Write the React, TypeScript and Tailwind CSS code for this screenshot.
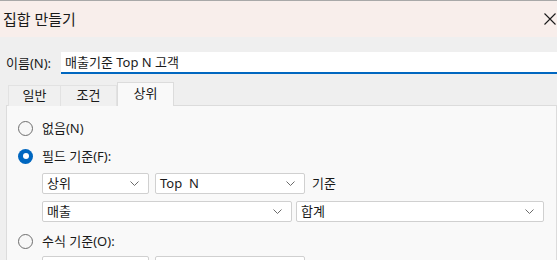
import React from "react";

const FONT = '"Noto Sans", "Noto Sans CJK KR", sans-serif';

function Chevron() {
  return (
    <svg width="9" height="5" viewBox="0 0 9 5" className="shrink-0">
      <path d="M0.5 0.5 L4.5 4.5 L8.5 0.5" fill="none" stroke="#6b6b6b" strokeWidth="1" />
    </svg>
  );
}

function Combo({ text, className }: { text: string; className: string }) {
  return (
    <div
      className={
        "h-[21px] bg-white border border-[#d0d0d0] rounded-[2px] flex items-center justify-between pl-[4px] pr-[9px] text-[13px] text-[#1a1a1a] " +
        className
      }
    >
      <span className="leading-none whitespace-pre">{text}</span>
      <Chevron />
    </div>
  );
}

function Radio({ checked, label }: { checked?: boolean; label: string }) {
  return (
    <div className="h-[20px] flex items-center">
      {checked ? (
        <div className="w-[15px] h-[15px] rounded-full bg-[#0067c0] flex items-center justify-center">
          <div className="w-[6px] h-[6px] rounded-full bg-white" />
        </div>
      ) : (
        <div className="w-[15px] h-[15px] rounded-full border border-[#6e6e6e] bg-[#f7f7f7]" />
      )}
      <span className="ml-[9px] text-[13px] text-[#1a1a1a] leading-none">{label}</span>
    </div>
  );
}

export default function App() {
  return (
    <div
      className="w-[557px] h-[260px] overflow-hidden bg-[#efefef] flex flex-col"
      style={{ fontFamily: FONT }}
    >
      <div className="h-[37px] shrink-0 border-t border-[#a8a8a8] bg-[#f8eeeb] flex items-center justify-between pl-[3px] pr-[1px]">
        <span className="text-[15px] text-[#1a1a1a] leading-none">집합 만들기</span>
        <svg width="12" height="12" viewBox="0 0 12 12" className="mb-[1px]">
          <path d="M0.5 0.5 L11.5 11.5 M11.5 0.5 L0.5 11.5" stroke="#1a1a1a" strokeWidth="1.1" />
        </svg>
      </div>

      <div className="mt-[15px] flex items-center pl-[6px]">
        <span className="w-[55px] text-[13px] text-[#1a1a1a] leading-none">이름(N):</span>
        <div className="flex-1 h-[22px] bg-white border-b-2 border-[#0067c0] flex items-center pl-[4px] text-[13px] text-[#1a1a1a]">
          <span className="leading-none">매출기준 Top N 고객</span>
        </div>
      </div>

      <div className="mt-[8px] ml-[6px] flex flex-col flex-1">
        <div className="flex items-end h-[24px] pl-[2px] relative z-10 -mb-[1px]">
          <div className="w-[53px] h-[21px] bg-[#f0f0f0] border border-[#e2e2e2] border-b-0 flex items-center justify-center text-[13px] text-[#1a1a1a]">
            일반
          </div>
          <div className="w-[56px] h-[21px] bg-[#f0f0f0] border border-[#e2e2e2] border-b-0 border-l-0 flex items-center justify-center text-[13px] text-[#1a1a1a]">
            조건
          </div>
          <div className="w-[57px] h-[24px] bg-[#f9f9f9] border border-[#dcdcdc] border-b-0 flex items-center justify-center text-[13px] text-[#1a1a1a] pb-[2px]">
            상위
          </div>
        </div>
        <div className="flex-1 bg-[#f9f9f9] border border-[#dcdcdc] pl-[11px]">
          <div className="mt-[12px]">
            <Radio label="없음(N)" />
          </div>
          <div className="mt-[8px]">
            <Radio checked label="필드 기준(F):" />
          </div>
          <div className="mt-[7px] ml-[24px] flex items-center">
            <Combo text="상위" className="w-[107px]" />
            <Combo text="Top  N" className="w-[150px] ml-[6px]" />
            <span className="ml-[7px] text-[13px] text-[#1a1a1a] leading-none">기준</span>
          </div>
          <div className="mt-[7px] ml-[24px] flex items-center">
            <Combo text="매출" className="w-[250px]" />
            <Combo text="합계" className="w-[248px] ml-[4px]" />
          </div>
          <div className="mt-[9px]">
            <Radio label="수식 기준(O):" />
          </div>
          <div className="mt-[5px] ml-[24px] flex items-center">
            <Combo text="" className="w-[107px]" />
            <Combo text="" className="w-[150px] ml-[6px]" />
          </div>
        </div>
      </div>
    </div>
  );
}
